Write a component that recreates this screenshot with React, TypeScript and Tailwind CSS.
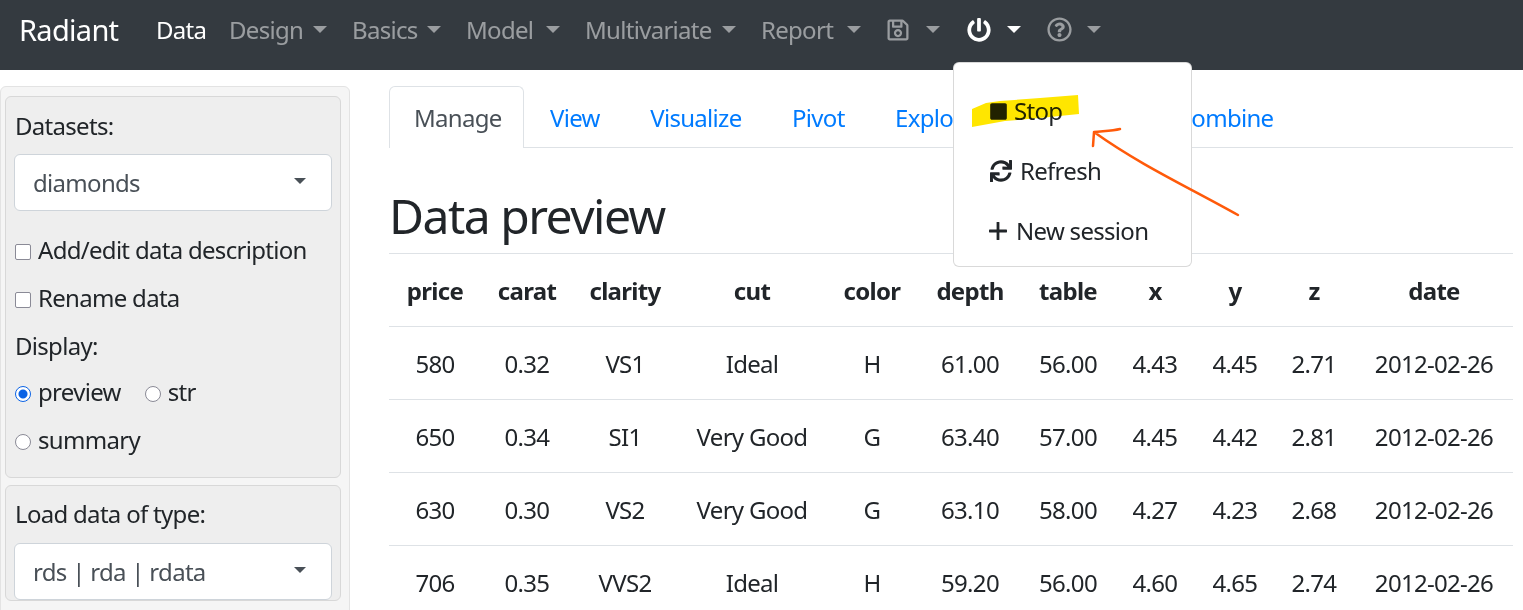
import { FaPowerOff, FaRegQuestionCircle, FaRegSave, FaStop, FaSync } from 'react-icons/fa';

const navItems = [
  { name: 'Design', className: 'w-[123px]' },
  { name: 'Basics', className: 'w-[114px]' },
  { name: 'Model', className: 'w-[119px]' },
  { name: 'Multivariate', className: 'w-[176px]' },
  { name: 'Report', className: 'w-[125px]' },
];

const columns = [
  { name: 'price', className: 'w-[92px]' },
  { name: 'carat', className: 'w-[92px]' },
  { name: 'clarity', className: 'w-[104px]' },
  { name: 'cut', className: 'w-[150px]' },
  { name: 'color', className: 'w-[90px]' },
  { name: 'depth', className: 'w-[106px]' },
  { name: 'table', className: 'w-[90px]' },
  { name: 'x', className: 'w-[84px]' },
  { name: 'y', className: 'w-[76px]' },
  { name: 'z', className: 'w-[82px]' },
  { name: 'date', className: 'w-[158px]' },
];

const rows = [
  ['580', '0.32', 'VS1', 'Ideal', 'H', '61.00', '56.00', '4.43', '4.45', '2.71', '2012-02-26'],
  ['650', '0.34', 'SI1', 'Very Good', 'G', '63.40', '57.00', '4.45', '4.42', '2.81', '2012-02-26'],
  ['630', '0.30', 'VS2', 'Very Good', 'G', '63.10', '58.00', '4.27', '4.23', '2.68', '2012-02-26'],
  ['706', '0.35', 'VVS2', 'Ideal', 'H', '59.20', '56.00', '4.60', '4.65', '2.74', '2012-02-26'],
];

const tabs = ['View', 'Visualize', 'Pivot', 'Explore', 'Transform', 'Combine'];

function Caret({ className }: { className: string }) {
  return <span className={`inline-block border-x-[7px] border-t-[7px] border-x-transparent ${className}`} />;
}

function SelectBox({ value }: { value: string }) {
  return (
    <div className="flex h-[57px] items-center justify-between rounded-md border border-[#ced4da] bg-white pl-[18px] pr-[25px] text-[#495057]">
      <span>{value}</span>
      <span className="mb-[4px] inline-block border-x-[6px] border-t-[6px] border-x-transparent border-t-[#495057]" />
    </div>
  );
}

function Check({ label }: { label: string }) {
  return (
    <label className="flex h-9 items-center gap-[7px]">
      <input
        type="checkbox"
        className="mt-[3px] h-4 w-4 shrink-0 appearance-none rounded-[2px] border-[1.5px] border-[#8a8a96] bg-white"
      />
      {label}
    </label>
  );
}

function Radio({ label, checked }: { label: string; checked?: boolean }) {
  return (
    <label className="flex h-9 items-center gap-[7px]">
      <input
        type="radio"
        name="display"
        defaultChecked={checked}
        className="mt-[3px] h-4 w-4 shrink-0 appearance-none rounded-full border-[1.5px] border-[#8a8a96] bg-white checked:border-[#0b63e5] checked:bg-[radial-gradient(circle,#0b63e5_0,#0b63e5_4px,#ffffff_5px)]"
      />
      {label}
    </label>
  );
}

export default function App() {
  return (
    <div className="relative h-[610px] w-[1523px] overflow-hidden bg-white font-['Noto_Sans',sans-serif] text-[24px] leading-9 tracking-[-0.7px] text-[#212529]">
      <nav className="flex h-[70px] items-center bg-[#343a40] pb-[11px] pl-[19px] text-[#ffffff80]">
        <span className="w-[137px] text-[29px] text-white">Radiant</span>
        <span className="w-[73px] text-white">Data</span>
        {navItems.map((item) => (
          <div key={item.name} className={`flex items-center ${item.className}`}>
            <span className="grow">{item.name}</span>
            <Caret className="mr-[25px] border-t-[#ffffff80]" />
          </div>
        ))}
        <div className="ml-[1px] flex w-[80px] items-center gap-[17px]">
          <FaRegSave className="h-[24px] w-[22px]" />
          <Caret className="border-t-[#ffffff80]" />
        </div>
        <div className="flex w-[80px] items-center gap-[16px] text-white">
          <FaPowerOff className="h-[24px] w-[24px]" />
          <Caret className="border-t-white" />
        </div>
        <div className="flex items-center gap-[15px]">
          <FaRegQuestionCircle className="h-[25px] w-[25px]" />
          <Caret className="border-t-[#ffffff80]" />
        </div>
      </nav>

      <div className="flex items-start">
        <aside className="mt-[16px] flex h-[600px] w-[350px] shrink-0 flex-col gap-[7px] rounded-md border border-[#e3e3e3] bg-[#f5f5f5] py-[9px] pl-[4px] pr-[8px]">
          <div className="h-[382px] rounded-md border border-[#d8d8d8] bg-[#eeeeee] px-[8px] pt-[11px]">
            <div className="mb-[10px] h-9 pl-[1px]">Datasets:</div>
            <SelectBox value="diamonds" />
            <div className="mt-[21px] flex flex-col gap-3 pl-[1px]">
              <Check label="Add/edit data description" />
              <Check label="Rename data" />
              <div className="h-9">Display:</div>
              <div className="-mt-[2px] flex gap-[24px]">
                <Radio label="preview" checked />
                <Radio label="str" />
              </div>
              <Radio label="summary" />
            </div>
          </div>
          <div className="rounded-md border border-[#d8d8d8] bg-[#eeeeee] px-[8px] pt-[10px]">
            <div className="mb-[11px] h-9 pl-[1px]">Load data of type:</div>
            <SelectBox value="rds | rda | rdata" />
          </div>
        </aside>

        <main className="ml-[39px] mt-[16px] w-[1124px] shrink-0">
          <div className="flex h-[62px] border-b border-[#dee2e6]">
            <div className="h-[62px] w-[135px] rounded-t-md border border-b-0 border-[#dee2e6] bg-white pl-[24px] pt-[13px] text-[#495057]">
              Manage
            </div>
            <div className="flex gap-[50.5px] pl-[26px] pt-[14px] text-[#007bff]">
              {tabs.map((tab) => (
                <span key={tab} className={tab === 'Combine' ? '-ml-[9px]' : ''}>
                  {tab}
                </span>
              ))}
            </div>
          </div>
          <h2 className="mb-[8px] mt-[39px] h-[58px] text-[48px] leading-[58px] tracking-[-1.5px]">Data preview</h2>
          <table className="w-[1124px] table-fixed border-collapse">
            <thead>
              <tr className="h-[73px] border-y border-[#dee2e6]">
                {columns.map((col) => (
                  <th key={col.name} className={`p-0 pt-[2px] text-center font-bold ${col.className}`}>
                    {col.name}
                  </th>
                ))}
              </tr>
            </thead>
            <tbody>
              {rows.map((row) => (
                <tr key={row[0]} className="h-[73px] border-b border-[#dee2e6]">
                  {row.map((cell, i) => (
                    <td key={i} className="p-0 pt-[2px] text-center">
                      {cell}
                    </td>
                  ))}
                </tr>
              ))}
            </tbody>
          </table>
        </main>
      </div>

      {/* open menu */}
      <div className="absolute left-[953px] top-[62px] flex h-[205px] w-[239px] flex-col gap-6 rounded-md border border-[#00000026] bg-white pl-[35px] pt-[30px]">
        <div className="flex h-9 items-center gap-[6px]">
          <FaStop className="h-[19px] w-[19px]" />
          Stop
        </div>
        <div className="flex h-9 items-center gap-[7px]">
          <FaSync className="h-[22px] w-[24px]" />
          Refresh
        </div>
        <div className="flex h-9 items-center gap-[9px]">
          <svg width="18" height="18" viewBox="0 0 18 18" className="shrink-0 fill-[#212529]">
            <rect x="7.6" y="0" width="2.8" height="18" rx="0.6" />
            <rect x="0" y="7.6" width="18" height="2.8" rx="0.6" />
          </svg>
          New session
        </div>
      </div>

      {/* marker and arrow drawn on top of the screenshot */}
      <svg className="absolute left-0 top-0 mix-blend-multiply" width="1523" height="610">
        <path d="M972 109 L986 103 L1000 101 L1040 98 L1078 95 L1079 114 L1040 118 L1005 121 L972 127 Z" fill="#ffe600" />
      </svg>
      <svg className="absolute left-0 top-0" width="1523" height="610" fill="none">
        <path d="M1238 215 C1190 188 1140 165 1094 132 M1094 132 C1102 131 1112 131 1120 129 M1094 132 L1093 146" stroke="#ff5a0a" strokeWidth="2.5" strokeLinecap="round" />
      </svg>
    </div>
  );
}
